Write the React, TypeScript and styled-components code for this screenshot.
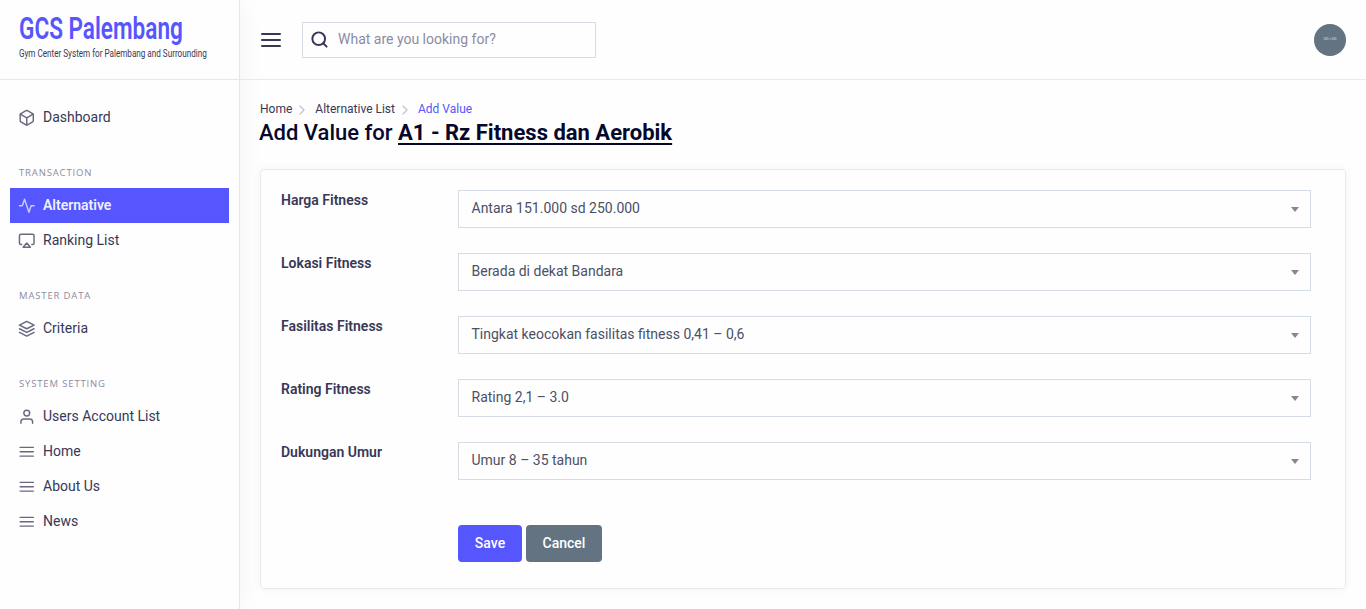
import React from "react";
import styled, { createGlobalStyle, css } from "styled-components";
import { FiActivity, FiAirplay, FiBox, FiChevronRight, FiLayers, FiMenu, FiSearch, FiUser } from "react-icons/fi";

const GlobalStyle = createGlobalStyle`
  *, *::before, *::after { box-sizing: border-box; }
  body {
    margin: 0;
    background: #fefefe;
    color: #373857;
    font-family: Roboto, "Liberation Sans", sans-serif;
    font-size: 14px;
    line-height: 1.5;
    overflow: hidden;
  }
`;

const Page = styled.div`
  display: flex;
  height: 609px;
`;

const Sidebar = styled.aside`
  flex: 0 0 240px;
  width: 240px;
  min-width: 0;
  border-right: 1px solid #e4e6f0;
  background: #fefefe;
  box-shadow: 0 0 25px rgba(28, 39, 60, 0.05);
`;

const Brand = styled.div`
  display: flex;
  flex-direction: column;
  align-items: flex-start;
  height: 80px;
  padding: 10px 0 0 19px;
  border-bottom: 1px solid #e4e6f0;
  white-space: nowrap;
`;

const BrandName = styled.span`
  color: #5556fd;
  font-size: 32px;
  font-weight: 600;
  line-height: 37px;
  transform: scaleX(0.705);
  transform-origin: left;
`;

const BrandTagline = styled.span`
  margin-top: 1px;
  color: #373857;
  font-size: 10.5px;
  line-height: 12px;
  transform: scaleX(0.773);
  transform-origin: left;
`;

const Nav = styled.nav`
  padding: 20px 10px 0;
`;

const NavHeading = styled.div`
  padding-left: 9px;
  margin-bottom: 8px;
  color: #8b8ca1;
  font-family: "Open Sans", sans-serif;
  font-size: 9.5px;
  letter-spacing: 0.85px;
  line-height: 15px;
`;

const NavGroup = styled.div`
  margin-bottom: 30px;
`;

const NavItem = styled.a<{ $active?: boolean }>`
  display: flex;
  align-items: center;
  gap: 8px;
  height: 35px;
  padding-left: 7.5px;
  color: #373857;

  svg {
    width: 17.5px;
    height: 17.5px;
    margin-top: -0.5px;
    opacity: 0.75;
  }

  ${({ $active }) =>
    $active &&
    css`
      background: #5556fd;
      color: #f0f0ff;
      font-weight: 600;
    `}
`;

const Main = styled.main`
  flex: 1;
  min-width: 0;
`;

const TopBar = styled.header`
  display: flex;
  align-items: center;
  height: 80px;
  padding: 0 20px 0 19px;
  border-bottom: 1px solid #e9eaf0;
  color: #373857;
`;

const SearchBox = styled.div`
  display: flex;
  align-items: center;
  gap: 9.5px;
  width: 294px;
  height: 36px;
  margin: 0 auto 0 19px;
  padding: 0 6.5px;
  border: 1px solid #d5dce4;
  color: #8b8ca1;

  svg {
    color: #373857;
    stroke-width: 2.5;
  }
`;

const Avatar = styled.div`
  display: grid;
  place-items: center;
  width: 32px;
  height: 32px;
  border-radius: 50%;
  background: #637382;
  color: #d9dee3;
  font-size: 3px;
  line-height: 1;
`;

const Content = styled.div`
  padding: 20px 20px 0;
`;

const Breadcrumb = styled.div`
  display: flex;
  align-items: center;
  height: 18px;
  font-size: 12px;

  svg {
    margin: 1px 5px 0 2px;
    color: #c0c8d4;
  }
`;

const Current = styled.span`
  color: #5556fd;
`;

const Title = styled.h1`
  margin: 0 0 21px -1px;
  color: #06072d;
  font-size: 22px;
  font-weight: 500;
  line-height: 30px;

  u {
    font-weight: 700;
    text-decoration-thickness: 2px;
    text-underline-offset: 3px;
    text-decoration-skip-ink: none;
  }
`;

const Card = styled.section`
  height: 420px;
  padding: 20px 34px 0 20px;
  border: 1px solid #e9eaf0;
  border-radius: 4px;
  box-shadow: 0 0 10px rgba(28, 39, 60, 0.05);
`;

const Field = styled.div`
  display: flex;
  height: 38px;
  margin-bottom: 25px;
`;

const Label = styled.span`
  flex: 0 0 177px;
  font-weight: 600;
`;

const Select = styled.div`
  display: flex;
  flex: 1;
  align-items: center;
  justify-content: space-between;
  padding: 0 11px 2px 12.5px;
  border: 1px solid #d5dce4;
  color: #4b5066;

  &::after {
    content: "";
    margin-top: 3px;
    border: 4px solid transparent;
    border-top: 5px solid #888;
    border-bottom: 0;
  }
`;

const Actions = styled.div`
  display: flex;
  gap: 4px;
  padding: 20px 0 0 177px;
`;

const Button = styled.button<{ $primary?: boolean }>`
  width: ${({ $primary }) => ($primary ? 64 : 76)}px;
  height: 37px;
  padding: 0 0 2px;
  border: 0;
  border-radius: 4px;
  background: ${({ $primary }) => ($primary ? "#5556fd" : "#637382")};
  color: #fff;
  font: 500 14px Roboto, sans-serif;
`;

const groups = [
  { items: [{ label: "Dashboard", Icon: FiBox }] },
  {
    heading: "TRANSACTION",
    items: [
      { label: "Alternative", Icon: FiActivity, active: true },
      { label: "Ranking List", Icon: FiAirplay },
    ],
  },
  { heading: "MASTER DATA", items: [{ label: "Criteria", Icon: FiLayers }] },
  {
    heading: "SYSTEM SETTING",
    items: [
      { label: "Users Account List", Icon: FiUser },
      { label: "Home", Icon: FiMenu },
      { label: "About Us", Icon: FiMenu },
      { label: "News", Icon: FiMenu },
    ],
  },
] as { heading?: string; items: { label: string; Icon: React.ElementType; active?: boolean }[] }[];

const fields = [
  ["Harga Fitness", "Antara 151.000 sd 250.000"],
  ["Lokasi Fitness", "Berada di dekat Bandara"],
  ["Fasilitas Fitness", "Tingkat keocokan fasilitas fitness 0,41 – 0,6"],
  ["Rating Fitness", "Rating 2,1 – 3.0"],
  ["Dukungan Umur", "Umur 8 – 35 tahun"],
];

export default function App() {
  return (
    <Page>
      <GlobalStyle />
      <Sidebar>
        <Brand>
          <BrandName>GCS Palembang</BrandName>
          <BrandTagline>Gym Center System for Palembang and Surrounding</BrandTagline>
        </Brand>
        <Nav>
          {groups.map(({ heading, items }, i) => (
            <NavGroup key={i}>
              {heading && <NavHeading>{heading}</NavHeading>}
              {items.map(({ label, Icon, active }) => (
                <NavItem key={label} $active={active}>
                  <Icon />
                  {label}
                </NavItem>
              ))}
            </NavGroup>
          ))}
        </Nav>
      </Sidebar>
      <Main>
        <TopBar>
          <FiMenu size={24} />
          <SearchBox>
            <FiSearch size={19} />
            What are you looking for?
          </SearchBox>
          <Avatar>500 x 500</Avatar>
        </TopBar>
        <Content>
          <Breadcrumb>
            Home
            <FiChevronRight size={16} />
            Alternative List
            <FiChevronRight size={16} />
            <Current>Add Value</Current>
          </Breadcrumb>
          <Title>
            Add Value for <u>A1 - Rz Fitness dan Aerobik</u>
          </Title>
          <Card>
            {fields.map(([label, value]) => (
              <Field key={label}>
                <Label>{label}</Label>
                <Select>{value}</Select>
              </Field>
            ))}
            <Actions>
              <Button $primary>Save</Button>
              <Button>Cancel</Button>
            </Actions>
          </Card>
        </Content>
      </Main>
    </Page>
  );
}
